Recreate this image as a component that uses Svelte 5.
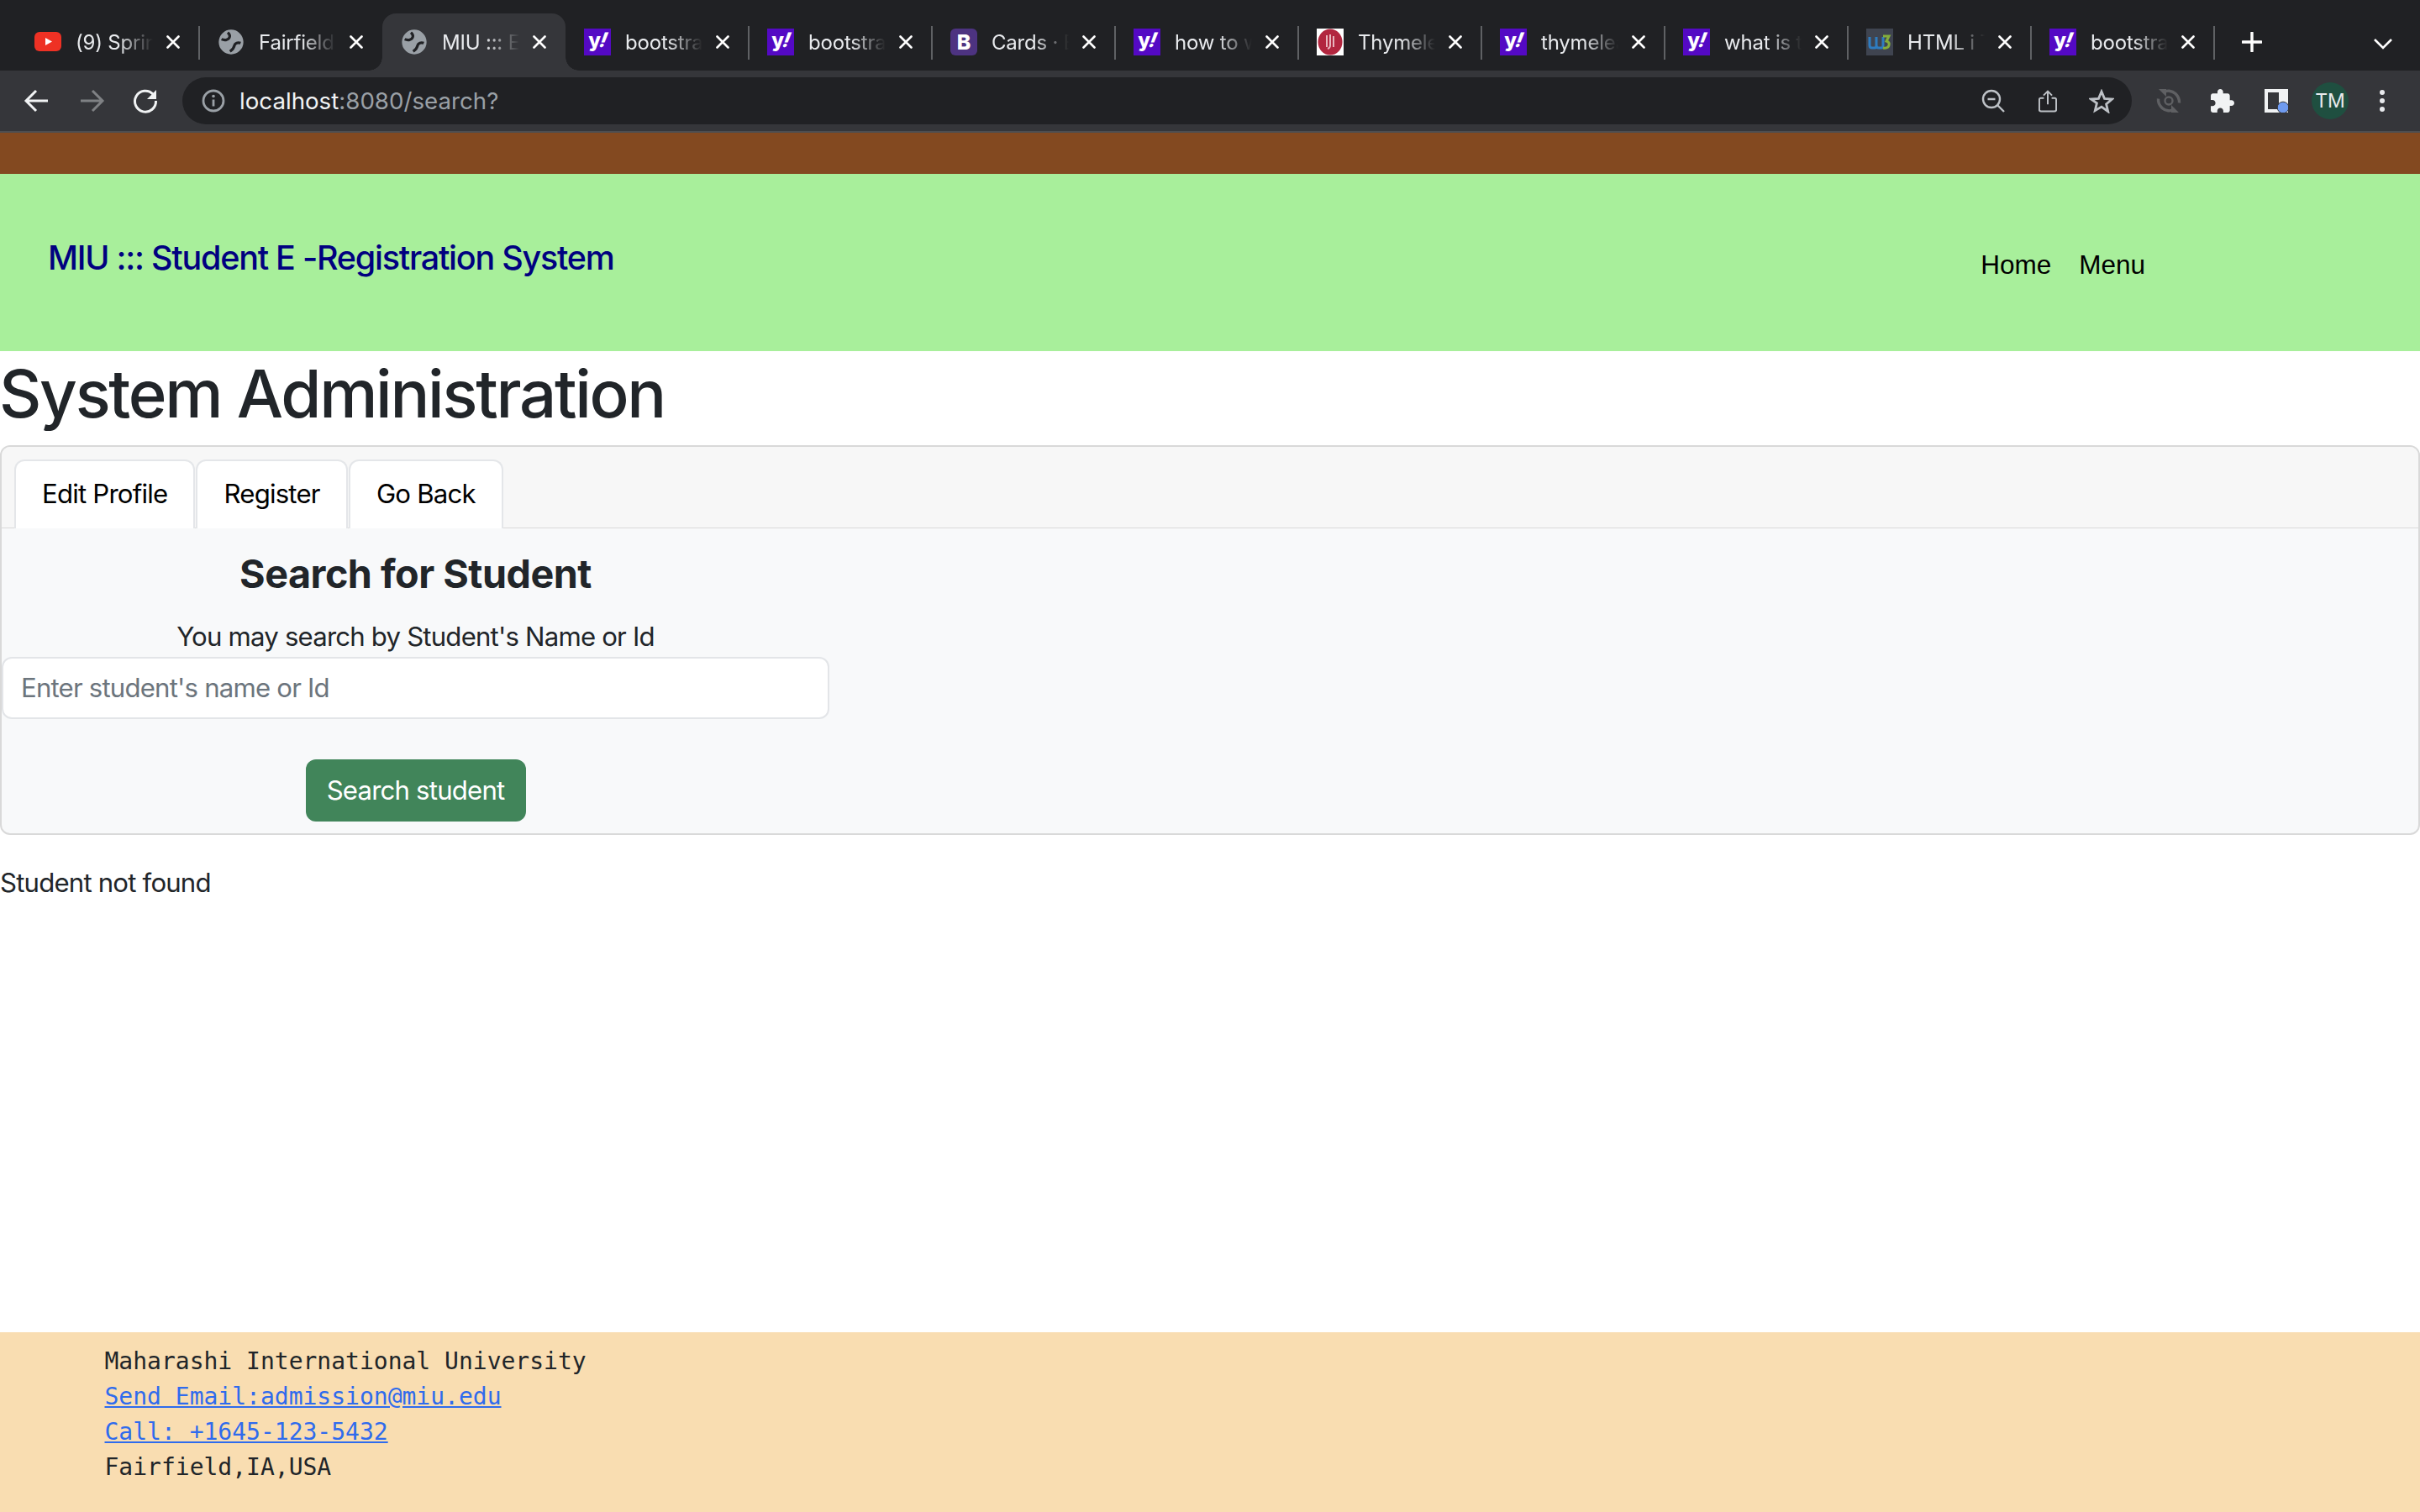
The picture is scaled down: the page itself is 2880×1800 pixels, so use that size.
<script>
	const tabs = [
		{ icon: 'yt', title: '(9) Spring Boot' },
		{ icon: 'globe', title: 'Fairfield University' },
		{ icon: 'globe', title: 'MIU ::: E-Registration', active: true },
		{ icon: 'yahoo', title: 'bootstrap card' },
		{ icon: 'yahoo', title: 'bootstrap tabs' },
		{ icon: 'bs', title: 'Cards · Bootstrap' },
		{ icon: 'yahoo', title: 'how to write' },
		{ icon: 'thyme', title: 'Thymeleaf' },
		{ icon: 'yahoo', title: 'thymeleaf if' },
		{ icon: 'yahoo', title: 'what is thymeleaf' },
		{ icon: 'w3', title: 'HTML i Tag' },
		{ icon: 'yahoo', title: 'bootstrap form' }
	];
</script>

{#snippet globe()}
	<svg class="fav globe" viewBox="0 0 24 24">
		<circle cx="12" cy="12" r="11" fill="#9aa0a6"/>
		<path d="M9 3.500C12 6 11 9 8 10 6 10.500 4.500 10 3.500 9.500M20.500 13C18 12 15.500 13 15 15 14.500 18 13 19 11 20.500" fill="none" stroke="#202124" stroke-width="2.400"/>
	</svg>
{/snippet}

<div class="browser">
	<div class="strip">
		{#each tabs as tab}
			<div class="tab" class:active={tab.active}>
				{#if tab.icon === 'yt'}
					<svg class="fav" viewBox="0 0 32 32">
						<rect x="0" y="4" width="32" height="23" rx="6" fill="#ee3124"/>
						<path d="M13 11l8 4.5-8 4.5z" fill="#fff"/>
					</svg>
				{:else if tab.icon === 'globe'}
					{@render globe()}
				{:else if tab.icon === 'yahoo'}
					<span class="fav yahoo">y<i>!</i></span>
				{:else if tab.icon === 'bs'}
					<span class="fav bs">B</span>
				{:else if tab.icon === 'thyme'}
					<svg class="fav" viewBox="0 0 32 32">
						<rect width="32" height="32" fill="#fff"/>
						<ellipse cx="16" cy="16" rx="14.5" ry="15.5" fill="#b2263f"/>
						<path d="M12 8v14M16 7v13q0 3-3 4M20 9v13" fill="none" stroke="#e8b5bd" stroke-width="2"/>
					</svg>
				{:else}
					<svg class="fav" viewBox="0 0 32 32">
						<rect width="32" height="32" fill="#3f4450"/>
						<path d="M4 10v10q0 3 3 3h3q2 0 2-3V10M12 20q0 3 3 3h3q2 0 2-3V10" fill="none" stroke="#2e7cc0" stroke-width="3"/>
						<path d="M20 9h7l-3 6q4 1 3 5t-7 3" fill="none" stroke="#84ad3c" stroke-width="3"/>
					</svg>
				{/if}
				<span class="title">{tab.title}</span>
				<svg class="close" viewBox="0 0 16 16">
					<path d="M1.5 1.5l13 13M14.5 1.5l-13 13" stroke="#fff" stroke-width="2.6" stroke-linecap="round"/>
				</svg>
			</div>
		{/each}
		<svg class="plus" viewBox="0 0 24 24">
			<path d="M12 1v22M1 12h22" stroke="#fff" stroke-width="3.4" stroke-linecap="round"/>
		</svg>
		<svg class="chevron" viewBox="0 0 24 14">
			<path d="M2 2l10 10L22 2" fill="none" stroke="#fff" stroke-width="2.6"/>
		</svg>
	</div>

	<div class="toolbar">
		<svg class="tool back" viewBox="0 0 32 32">
			<path d="M29 16H4M15 4L3 16l12 12" fill="none" stroke="#f1f3f4" stroke-width="3"/>
		</svg>
		<svg class="tool forward" viewBox="0 0 32 32">
			<path d="M3 16h25M17 4l12 12-12 12" fill="none" stroke="#7f8184" stroke-width="3"/>
		</svg>
		<svg class="tool reload" viewBox="0 0 32 32">
			<path d="M25 8A12.5 12.5 0 1 0 28.500 16" fill="none" stroke="#f1f3f4" stroke-width="3"/>
			<path d="M29 3v11H18z" fill="#f1f3f4"/>
		</svg>
		<div class="omnibox">
			<svg class="info" viewBox="0 0 28 28">
				<circle cx="14" cy="14" r="12" fill="none" stroke="#9aa0a6" stroke-width="2.8"/>
				<path d="M14 12.500v8" stroke="#9aa0a6" stroke-width="2.8"/>
				<circle cx="14" cy="8.500" r="1.800" fill="#9aa0a6"/>
			</svg>
			<span class="url">localhost<span class="dim">:8080/search?</span></span>
			<svg class="omni-icon zoomout" viewBox="0 0 28 28">
				<circle cx="12" cy="12" r="10" fill="none" stroke="#bdc1c6" stroke-width="2.400"/>
				<path d="M7.500 12h9M19 19l8 8" stroke="#bdc1c6" stroke-width="2.400"/>
			</svg>
			<svg class="omni-icon share" viewBox="0 0 24 30">
				<path d="M7 11H3q-2 0-2 2v13q0 2 2 2h18q2 0 2-2V13q0-2-2-2h-4" fill="none" stroke="#bdc1c6" stroke-width="2.200"/>
				<path d="M12 19V2M6.500 7.500L12 2l5.500 5.500" fill="none" stroke="#bdc1c6" stroke-width="2.200"/>
			</svg>
			<svg class="omni-icon star" viewBox="0 0 30 29">
				<path d="M15 3l3.500 8.300 9 .7-6.900 5.900 2.100 8.800L15 21.100 7.300 25.700l2.100-8.800L2.500 12l9-.7z" fill="none" stroke="#bdc1c6" stroke-width="2.800"/>
			</svg>
		</div>
		<div class="actions">
			<svg class="sync" viewBox="0 0 30 30">
				<path d="M8 5a12.500 12.500 0 0 1 15 1.500q5 5 4.500 11M22 25a12.500 12.500 0 0 1-15-1.500q-5-5-4.500-11" fill="none" stroke="#5f6063" stroke-width="3.400"/>
				<path d="M3 1h9v9zM27 29h-9v-9z" fill="#5f6063"/>
				<circle cx="15" cy="15" r="4.500" fill="none" stroke="#5f6063" stroke-width="2.400"/>
			</svg>
			<svg class="puzzle" viewBox="2 1 21 21">
				<path fill="#f1f3f4" d="M20.500 11H19V7c0-1.100-.9-2-2-2h-4V3.500C13 2.120 11.880 1 10.500 1S8 2.120 8 3.500V5H4c-1.100 0-1.990.9-1.990 2v3.800H3.500c1.490 0 2.700 1.210 2.700 2.700s-1.210 2.700-2.700 2.700H2V20c0 1.100.9 2 2 2h3.800v-1.500c0-1.490 1.210-2.700 2.700-2.700 1.490 0 2.700 1.210 2.700 2.700V22H17c1.100 0 2-.9 2-2v-4h1.500c1.380 0 2.500-1.120 2.500-2.500S21.880 11 20.500 11z"/>
			</svg>
			<svg class="panel" viewBox="0 0 28 28">
				<rect width="28" height="28" fill="#f1f3f4"/>
				<rect x="4" y="4" width="13" height="20" fill="#35363a"/>
				<circle cx="22" cy="22" r="6.800" fill="#6f9bf0" stroke="#35363a" stroke-width="1"/>
			</svg>
			<span class="avatar">TM</span>
			<span class="dots"><i></i><i></i><i></i></span>
		</div>
	</div>
</div>

<div class="brown"></div>

<header class="site-nav">
	<a class="brand" href="#top">MIU ::: Student E -Registration System</a>
	<nav class="links">
		<a href="#home">Home</a>
		<a href="#menu">Menu</a>
	</nav>
</header>

<main class="content">
	<h1>System Administration</h1>

	<section class="card">
		<div class="card-header">
			<a class="nav-tab" href="#edit">Edit Profile</a>
			<a class="nav-tab" href="#register">Register</a>
			<a class="nav-tab" href="#back">Go Back</a>
		</div>
		<div class="card-body">
			<form class="search">
				<h4>Search for Student</h4>
				<label for="q">You may search by Student's Name or Id</label>
				<input id="q" type="text" placeholder="Enter student's name or Id" />
				<button type="button">Search student</button>
			</form>
		</div>
	</section>

	<p class="result">Student not found</p>
</main>

<footer class="site-footer">
	<div>Maharashi International University</div>
	<div><a href="#mail">Send Email:admission@miu.edu</a></div>
	<div><a href="#call">Call: +1645-123-5432</a></div>
	<div>Fairfield,IA,USA</div>
</footer>

<style>
	:global(body) {
		margin: 0;
		background: #fff;
	}
	:global(#app) {
		width: 2880px;
		height: 1800px;
		display: flex;
		flex-direction: column;
		overflow: hidden;
		font-family: Inter, "Liberation Sans", sans-serif;
	}

	/* browser chrome */
	.browser {
		flex: none;
	}
	.strip {
		height: 68px;
		padding: 16px 0 0 19px;
		background: #202124;
		display: flex;
	}
	.tab {
		position: relative;
		width: 218px;
		height: 68px;
		flex: none;
		box-sizing: border-box;
		padding-left: 22px;
		display: flex;
		align-items: center;
		color: #e8eaed;
		font-size: 24px;
		letter-spacing: -0.2px;
	}
	.tab::after {
		content: "";
		position: absolute;
		right: -1px;
		top: 15px;
		width: 2px;
		height: 40px;
		background: #5f6164;
	}
	.tab:nth-child(2)::after,
	.tab.active::after {
		display: none;
	}
	.tab.active {
		background: #35363a;
		border-radius: 16px 16px 0 0;
	}
	.tab.active::before {
		content: "";
		position: absolute;
		left: -16px;
		right: -16px;
		bottom: 0;
		height: 16px;
		z-index: 0;
		background:
			radial-gradient(circle at 0 0, #202124 15.5px, #35363a 16px) left / 16px 16px no-repeat,
			radial-gradient(circle at 100% 0, #202124 15.5px, #35363a 16px) right / 16px 16px no-repeat;
	}
	.fav {
		width: 32px;
		height: 32px;
		flex: none;
		display: block;
		position: relative;
	}
	.yahoo {
		background: #5409c4;
		color: #fff;
		font-weight: 800;
		font-size: 24px;
		line-height: 28px;
		text-align: center;
		letter-spacing: -1px;
	}
	.yahoo i {
		display: inline-block;
		transform: skewX(-12deg);
	}
	.bs {
		background: #4d3381;
		border-radius: 6px;
		color: #fff;
		font-weight: 800;
		font-size: 25px;
		line-height: 32px;
		text-align: center;
	}
	.title {
		width: 92px;
		margin-left: 17px;
		white-space: nowrap;
		overflow: hidden;
		position: relative;
		-webkit-mask-image: linear-gradient(to right, #000 55%, transparent 100%);
		mask-image: linear-gradient(to right, #000 55%, transparent 100%);
	}
	.close {
		width: 16px;
		height: 16px;
		margin-left: 16px;
		flex: none;
		position: relative;
	}
	.plus {
		width: 24px;
		height: 24px;
		margin: 22px 0 0 33px;
		flex: none;
	}
	.chevron {
		width: 24px;
		height: 14px;
		margin: 29px 32px 0 auto;
		flex: none;
	}
	.toolbar {
		height: 72px;
		background: #35363a;
		border-bottom: 2px solid #4d4e51;
		display: flex;
		align-items: center;
	}
	.tool {
		width: 32px;
		height: 32px;
		flex: none;
	}
	.back {
		margin-left: 28px;
	}
	.forward {
		margin-left: 33px;
	}
	.reload {
		margin-left: 32px;
	}
	.omnibox {
		margin-left: 28px;
		width: 2320px;
		height: 56px;
		border-radius: 28px;
		background: #202124;
		display: flex;
		align-items: center;
		box-sizing: border-box;
		padding-left: 23px;
		flex: none;
	}
	.info {
		width: 28px;
		height: 28px;
		flex: none;
	}
	.url {
		margin-left: 17px;
		font-size: 27.7px;
		color: #f1f3f4;
		white-space: nowrap;
	}
	.dim {
		color: #9aa0a6;
	}
	.omni-icon {
		flex: none;
	}
	.zoomout {
		width: 28px;
		height: 28px;
		margin-left: auto;
	}
	.share {
		width: 22px;
		height: 29px;
		margin-left: 40px;
	}
	.star {
		width: 30px;
		height: 29px;
		margin-left: 38px;
		margin-right: 21px;
	}
	.actions {
		display: flex;
		align-items: center;
		flex: none;
	}
	.sync {
		width: 30px;
		height: 30px;
		margin-left: 29px;
	}
	.puzzle {
		width: 28px;
		height: 28px;
		margin-left: 35px;
	}
	.panel {
		width: 28px;
		height: 28px;
		margin-left: 36px;
	}
	.avatar {
		width: 44px;
		height: 44px;
		margin-left: 28px;
		border-radius: 50%;
		background: #1f4f40;
		color: #e8eaed;
		font-size: 23px;
		line-height: 44px;
		text-align: center;
	}
	.dots {
		margin-left: 37px;
		width: 8px;
		display: flex;
		flex-direction: column;
		gap: 4px;
	}
	.dots i {
		width: 6px;
		height: 6px;
		border-radius: 50%;
		background: #e8eaed;
	}

	/* page */
	.brown {
		height: 49px;
		background: #834920;
		flex: none;
	}
	.site-nav {
		height: 211px;
		flex: none;
		background: #a8ef9b;
		display: flex;
		justify-content: space-between;
		box-sizing: border-box;
		padding: 0 327px 0 57px;
	}
	.brand {
		margin-top: 76px;
		font-size: 39.5px;
		line-height: 48px;
		font-weight: 500;
		letter-spacing: -1.25px;
		color: #000080;
		text-decoration: none;
	}
	.links {
		margin-top: 90px;
		display: flex;
		gap: 33px;
	}
	.links a {
		font-family: "Liberation Sans", Arial, sans-serif;
		font-size: 31.5px;
		line-height: 36px;
		color: #000;
		text-decoration: none;
	}
	.content {
		flex: 1;
		font-size: 31.150px;
		line-height: 47px;
		letter-spacing: -0.8px;
		color: #212529;
	}
	h1 {
		margin: 12px 0 23px -1px;
		font-size: 78px;
		line-height: 77px;
		font-weight: 500;
		letter-spacing: -2.3px;
	}
	.card {
		margin-top: 0;
		border: 2px solid #d9d9d9;
		border-radius: 12px;
		background: #f8f9fa;
	}
	.card-header {
		height: 97px;
		background: #f7f7f7;
		border-bottom: 1px solid #d9d9d9;
		border-radius: 10px 10px 0 0;
		padding: 15px 0 0 15px;
		box-sizing: border-box;
		display: flex;
		gap: 1px;
	}
	.nav-tab {
		height: 82px;
		box-sizing: border-box;
		padding: 0 31.1px;
		background: #fff;
		border: 2px solid #e4e6e9;
		border-bottom: none;
		border-radius: 12px 12px 0 0;
		color: #000;
		text-decoration: none;
		line-height: 79px;
		margin-bottom: -1px;
		position: relative;
	}
	.card-body {
		height: 363px;
		box-sizing: border-box;
		padding: 0;
	}
	.search {
		width: 985px;
		display: flex;
		flex-direction: column;
		align-items: center;
	}
	h4 {
		margin: 26px 0 24px;
		font-size: 46.700px;
		line-height: 56px;
		font-weight: 700;
		letter-spacing: -0.5px;
	}
	label {
		line-height: 47px;
		text-align: center;
		height: 47px;
		margin-bottom: 0;
	}
	input {
		width: 100%;
		height: 74px;
		box-sizing: border-box;
		padding: 0 21px;
		font: inherit;
		letter-spacing: inherit;
		background: #fff;
		border: 2px solid #e3e5e8;
		border-radius: 12px;
		color: #212529;
	}
	input::placeholder {
		color: #6c757d;
		opacity: 1;
	}
	button {
		margin-top: 48px;
		width: 262px;
		height: 74px;
		padding: 0;
		font: inherit;
		letter-spacing: inherit;
		border: none;
		border-radius: 12px;
		background: #41855a;
		color: #fff;
	}
	.result {
		margin: 34px 0 0;
	}
	.site-footer {
		height: 214px;
		flex: none;
		box-sizing: border-box;
		background: #f9ddb1;
		padding: 14px 0 0 124.5px;
		font-family: "DejaVu Sans Mono", monospace;
		font-size: 28px;
		line-height: 42px;
		color: #212529;
	}
	.site-footer a {
		color: #2f6bed;
	}
</style>
